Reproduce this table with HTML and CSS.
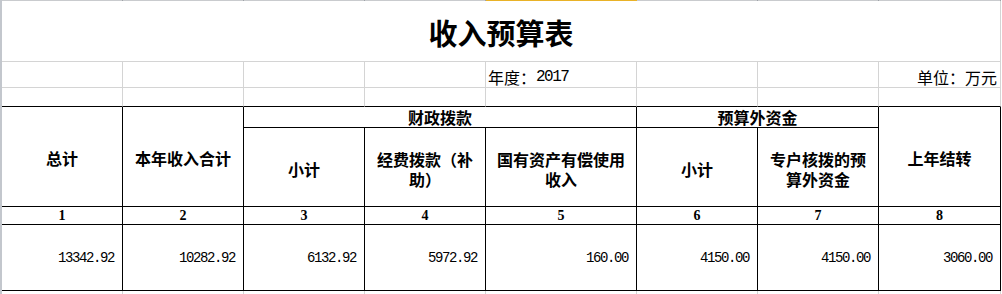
FILE: index.html
```html
<!DOCTYPE html>
<html lang="zh-CN">
<head>
<meta charset="utf-8">
<title>收入预算表</title>
<link rel="stylesheet" href="styles.css">
</head>
<body>
<div class="sheet">
  <div class="strip"></div><div class="strip"></div><div class="strip"></div><div class="strip"></div>
  <div class="strip sel"></div><div class="strip"></div><div class="strip"></div><div class="strip"></div>

  <div class="cell title">收入预算表</div>

  <div class="cell"></div><div class="cell"></div><div class="cell"></div><div class="cell"></div>
  <div class="cell meta left">年度：<span class="mono">2017</span></div>
  <div class="cell"></div><div class="cell"></div>
  <div class="cell meta right">单位：万元</div>

  <div class="cell edge"></div><div class="cell edge"></div><div class="cell edge"></div><div class="cell edge"></div>
  <div class="cell edge"></div><div class="cell edge"></div><div class="cell edge"></div><div class="cell edge"></div>

  <div class="cell h rows2">总计</div>
  <div class="cell h rows2">本年收入合计</div>
  <div class="cell h cols3">财政拨款</div>
  <div class="cell h cols2">预算外资金</div>
  <div class="cell h rows2">上年结转</div>
  <div class="cell h sub">小计</div>
  <div class="cell h sub">经费拨款（补<br>助）</div>
  <div class="cell h sub">国有资产有偿使用<br>收入</div>
  <div class="cell h sub">小计</div>
  <div class="cell h sub">专户核拨的预<br>算外资金</div>

  <div class="cell h n">1</div><div class="cell h n">2</div><div class="cell h n">3</div><div class="cell h n">4</div>
  <div class="cell h n">5</div><div class="cell h n">6</div><div class="cell h n">7</div><div class="cell h n">8</div>

  <div class="cell b d">13342.92</div>
  <div class="cell b d">10282.92</div>
  <div class="cell b d">6132.92</div>
  <div class="cell b d">5972.92</div>
  <div class="cell b d">160.00</div>
  <div class="cell b d">4150.00</div>
  <div class="cell b d">4150.00</div>
  <div class="cell b d">3060.00</div>

  <div class="cell tail"></div><div class="cell tail"></div><div class="cell tail"></div><div class="cell tail"></div>
  <div class="cell tail"></div><div class="cell tail"></div><div class="cell tail"></div><div class="cell tail"></div>
</div>
</body>
</html>
```

FILE: styles.css
```css
html, body {
  margin: 0;
  background: #ffffff;
}

.sheet {
  display: grid;
  grid-template-columns: 121px 121px 121px 121px 151px 121px 121px 122px;
  grid-template-rows: 1px 61px 26px 19px 21px 79px 18px 66px 3px;
  width: max-content;
  border-left: 2px solid #c3c7cd;
  font-family: "Noto Sans CJK SC", sans-serif;
  color: #000000;
}

.strip {
  background: #c9cbce;
  border-right: 1px solid #9ea2a8;
  box-sizing: border-box;
}

.strip.sel {
  background: #e9b227;
  border-right-color: #e9b227;
}

.cell {
  box-sizing: border-box;
  border-right: 1px solid #d4d4d4;
  border-bottom: 1px solid #d4d4d4;
  display: flex;
  align-items: center;
  justify-content: center;
  text-align: center;
  white-space: nowrap;
  min-width: 0;
}

.title {
  grid-column: 1 / -1;
  font-size: 29px;
  font-weight: bold;
  line-height: 34px;
  padding-top: 1px;
}

.meta {
  font-size: 16px;
  line-height: 18px;
  align-items: flex-end;
  padding-bottom: 1px;
}

.meta.left {
  justify-content: flex-start;
  padding-left: 2px;
}

.meta.right {
  justify-content: flex-end;
  padding-right: 3px;
}

.mono {
  font-family: "Liberation Mono", monospace;
  letter-spacing: -1.5px;
  font-size: 16px;
}

.edge {
  border-bottom-color: #000000;
}

.h {
  border-right-color: #000000;
  border-bottom-color: #000000;
  font-weight: bold;
  font-size: 16px;
  line-height: 20px;
}

.rows2 {
  grid-row: span 2;
  padding-top: 2px;
}

.cols3 {
  grid-column: span 3;
}

.cols2 {
  grid-column: span 2;
}

.sub {
  padding-top: 3px;
}

.n {
  font-family: "Liberation Serif", serif;
  font-size: 14px;
  line-height: 16px;
  padding-top: 1px;
}

.b {
  border-right-color: #000000;
  border-bottom-color: #000000;
}

.d {
  justify-content: flex-end;
  padding-right: 8px;
  padding-top: 1px;
  font-family: "Liberation Mono", monospace;
  font-size: 14px;
  letter-spacing: -1.4px;
}

.tail {
  border-bottom: none;
}
```
